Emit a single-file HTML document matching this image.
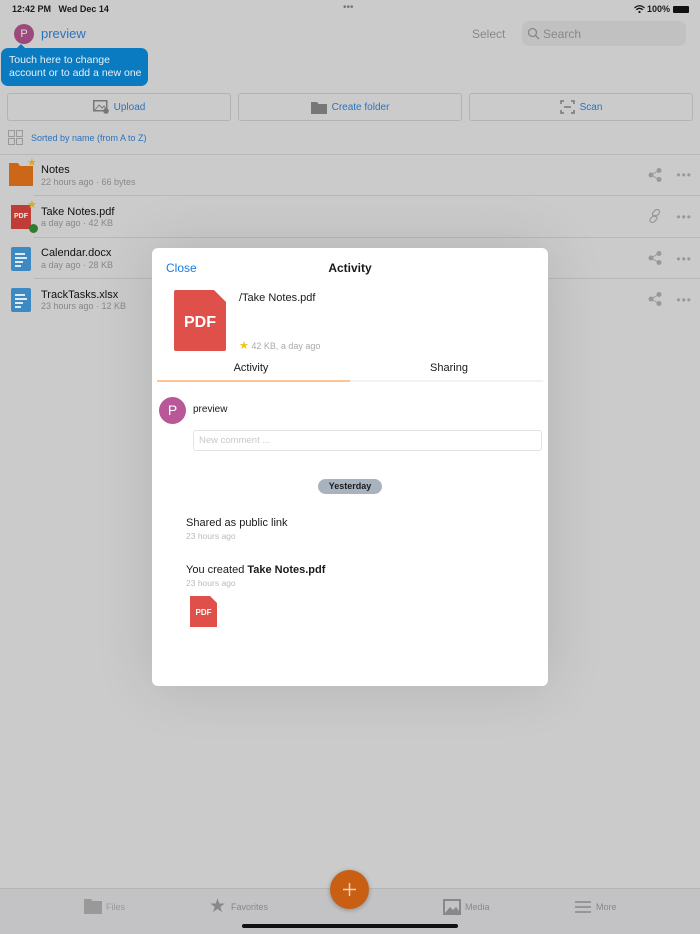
<!DOCTYPE html>
<html><head><meta charset="utf-8"><style>
*{box-sizing:border-box;margin:0;padding:0}
body{width:700px;height:934px;overflow:hidden;background:#cbcbcb;font-family:"Liberation Sans",sans-serif;position:relative;color:#1a1a1a}
.a{position:absolute}
.btn{position:absolute;top:93px;height:28px;border:1px solid #b3b3b3;border-radius:3px;font-size:10px;color:#2a73c0;display:flex;align-items:center;justify-content:center;gap:5px}
.row .n{font-size:11px;color:#111}
.row .m{font-size:9px;color:#888}
.sep{position:absolute;left:34px;right:0;height:1px;background:#b8b8b8}
.dots{position:absolute;right:8px;font-size:12px;color:#999;letter-spacing:1px}
.doc{position:absolute;left:11px;width:20px;height:24px;background:#3c89c4;border-radius:2px}
.doc i{position:absolute;left:4px;height:2px;background:#dfe9f2}
</style></head><body>
<div class="a" style="left:12px;top:4px;font-size:9px;font-weight:bold">12:42 PM&nbsp;&nbsp; Wed Dec 14</div>
<div class="a" style="left:343px;top:2px;font-size:10px;color:#777">•••</div>
<svg class="a" style="left:634px;top:5px" width="11" height="8"><path d="M0.5 3Q5.5 -1.5 10.5 3M2.2 4.8Q5.5 1.8 8.8 4.8" fill="none" stroke="#111" stroke-width="1.3"/><circle cx="5.5" cy="7" r="1.1" fill="#111"/></svg>
<div class="a" style="left:647px;top:4px;font-size:9px;font-weight:bold">100% <span style="display:inline-block;width:16px;height:7px;background:#111;border-radius:1px;vertical-align:middle"></span></div>
<div class="a" style="left:14px;top:24px;width:20px;height:20px;border-radius:50%;background:#9c4a7c;color:#ddd;font-size:11px;text-align:center;line-height:20px">P</div>
<div class="a" style="left:41px;top:26px;font-size:13px;color:#2a73c0">preview</div>
<div class="a" style="left:1px;top:48px;width:147px;height:38px;border-radius:7px;background:#0b7bc1;color:#e6f0f8;font-size:10.5px;padding:6px 0 0 8px;line-height:13px">Touch here to change<br>account or to add a new one</div>
<div class="a" style="left:16px;top:44px;border:5px solid transparent;border-bottom-color:#0b7bc1;border-top:0"></div>
<div class="a" style="left:472px;top:27px;font-size:12px;color:#888">Select</div>
<div class="a" style="left:522px;top:21px;width:164px;height:25px;border-radius:7px;background:#c1c1c1;color:#888;font-size:12px;padding:6px 0 0 21px">Search</div>
<svg class="a" style="left:527px;top:27px" width="13" height="13"><circle cx="5.5" cy="5.5" r="4" fill="none" stroke="#888" stroke-width="1.3"/><path d="M8.5 8.5 12 12" stroke="#888" stroke-width="1.4"/></svg>
<div class="btn" style="left:7px;width:224px"><svg width="16" height="14"><rect x=".75" y=".75" width="13" height="10" fill="none" stroke="#777" stroke-width="1.5"/><path d="M2 10 6 5 9 8 11 6 13 9" fill="none" stroke="#777"/><circle cx="13" cy="11" r="2.8" fill="#777"/></svg>Upload</div>
<div class="btn" style="left:238px;width:224px"><svg width="16" height="13"><path d="M0 1H6L7.5 3H16V13H0Z" fill="#777"/></svg>Create folder</div>
<div class="btn" style="left:469px;width:224px"><svg width="15" height="14"><path d="M1 4V1H4M11 1H14V4M14 10V13H11M4 13H1V10M4 7H11" fill="none" stroke="#777" stroke-width="1.5"/></svg>Scan</div>
<svg class="a" style="left:8px;top:130px" width="15" height="15"><g fill="none" stroke="#999"><rect x=".5" y=".5" width="6" height="6"/><rect x="8.5" y=".5" width="6" height="6"/><rect x=".5" y="8.5" width="6" height="6"/><rect x="8.5" y="8.5" width="6" height="6"/></g></svg>
<div class="a" style="left:31px;top:133px;font-size:9px;color:#2a73c0">Sorted by name (from A to Z)</div>
<div class="a" style="left:0;right:0;top:154px;height:1px;background:#b8b8b8"></div>
<div class="row">
<svg class="a" style="left:9px;top:163px" width="24" height="23"><path d="M0 0H9L11 3H24V23H0Z" fill="#cc6618"/></svg><div class="a" style="left:27px;top:156px;color:#d8a928;font-size:11px">★</div>
<div class="a n" style="left:41px;top:164px">Notes</div><div class="a m" style="left:41px;top:177px">22 hours ago · 66 bytes</div>
<div class="sep" style="top:195px"></div>
<div class="a" style="left:11px;top:205px;width:20px;height:24px;background:#c03c36;color:#eee;font-size:7px;font-weight:bold;text-align:center;line-height:24px">PDF</div><div class="a" style="left:27px;top:198px;color:#d8a928;font-size:11px">★</div><div class="a" style="left:29px;top:224px;width:9px;height:9px;border-radius:50%;background:#2d7d2d"></div>
<div class="a n" style="left:41px;top:206px">Take Notes.pdf</div><div class="a m" style="left:41px;top:218px">a day ago · 42 KB</div>
<div class="sep" style="top:237px"></div>
<div class="doc" style="top:247px"><i style="top:6px;width:10px"></i><i style="top:10px;width:12px"></i><i style="top:14px;width:8px"></i><i style="top:18px;width:6px"></i></div>
<div class="a n" style="left:41px;top:247px">Calendar.docx</div><div class="a m" style="left:41px;top:260px">a day ago · 28 KB</div>
<div class="sep" style="top:278px"></div>
<div class="doc" style="top:288px"><i style="top:6px;width:10px"></i><i style="top:10px;width:12px"></i><i style="top:14px;width:8px"></i><i style="top:18px;width:6px"></i></div>
<div class="a n" style="left:41px;top:289px">TrackTasks.xlsx</div><div class="a m" style="left:41px;top:301px">23 hours ago · 12 KB</div>
</div>
<div class="dots" style="top:168px">•••</div><div class="dots" style="top:210px">•••</div><div class="dots" style="top:252px">•••</div><div class="dots" style="top:293px">•••</div>
<svg class="a" style="left:648px;top:168px" width="14" height="14"><g fill="#999" stroke="#999"><circle cx="11" cy="2.5" r="2"/><circle cx="3" cy="7" r="2"/><circle cx="11" cy="11.5" r="2"/><path d="M11 2.5 3 7 11 11.5" fill="none"/></g></svg>
<svg class="a" style="left:648px;top:251px" width="14" height="14"><g fill="#999" stroke="#999"><circle cx="11" cy="2.5" r="2"/><circle cx="3" cy="7" r="2"/><circle cx="11" cy="11.5" r="2"/><path d="M11 2.5 3 7 11 11.5" fill="none"/></g></svg>
<svg class="a" style="left:648px;top:292px" width="14" height="14"><g fill="#999" stroke="#999"><circle cx="11" cy="2.5" r="2"/><circle cx="3" cy="7" r="2"/><circle cx="11" cy="11.5" r="2"/><path d="M11 2.5 3 7 11 11.5" fill="none"/></g></svg>
<svg class="a" style="left:648px;top:209px" width="14" height="14"><g fill="none" stroke="#999" stroke-width="1.3"><rect x="5.5" y="0" width="5" height="8" rx="2.5" transform="rotate(45 8 4)"/><rect x="3" y="6" width="5" height="8" rx="2.5" transform="rotate(45 5.5 10)"/></g></svg>

<div class="a" style="left:152px;top:248px;width:396px;height:438px;background:#fff;border-radius:6px;box-shadow:0 0 60px rgba(0,0,0,.12)">
<div class="a" style="left:14px;top:13px;font-size:12px;color:#1a7be0">Close</div>
<div class="a" style="left:0;right:0;top:13px;text-align:center;font-size:12px;font-weight:bold">Activity</div>
<svg class="a" style="left:22px;top:42px" width="52" height="61"><path d="M2 0H40L52 12V59Q52 61 50 61H2Q0 61 0 59V2Q0 0 2 0Z" fill="#e0504a"/><text x="26" y="37" text-anchor="middle" font-family="Liberation Sans" font-weight="bold" font-size="16" fill="#fff">PDF</text></svg>
<div class="a" style="left:87px;top:44px;font-size:11px">/Take Notes.pdf</div>
<div class="a" style="left:87px;top:91px;font-size:9px;color:#aaa"><span style="color:#f2c21b;font-size:11px">★</span> 42 KB, a day ago</div>
<div class="a" style="left:0;width:198px;top:114px;text-align:center;font-size:11px">Activity</div>
<div class="a" style="left:198px;width:198px;top:114px;text-align:center;font-size:11px">Sharing</div>
<div class="a" style="left:5px;width:193px;top:132px;height:2px;background:#fbc596"></div>
<div class="a" style="left:198px;width:193px;top:132px;height:2px;background:#f2f2f2"></div>
<div class="a" style="left:7px;top:149px;width:27px;height:27px;border-radius:50%;background:#b85898;color:#fff;font-size:14px;text-align:center;line-height:27px">P</div>
<div class="a" style="left:41px;top:156px;font-size:10px">preview</div>
<div class="a" style="left:41px;top:182px;width:349px;height:21px;border:1px solid #e2e2e2;border-radius:3px;font-size:9.5px;color:#c8c8c8;padding:4px 5px">New comment ...</div>
<div class="a" style="left:166px;top:231px;width:64px;height:15px;border-radius:8px;background:#a9b3c0;font-size:9px;font-weight:bold;text-align:center;line-height:15px">Yesterday</div>
<div class="a" style="left:34px;top:269px;font-size:11px">Shared as public link</div>
<div class="a" style="left:34px;top:283px;font-size:8.5px;color:#bbb">23 hours ago</div>
<div class="a" style="left:34px;top:316px;font-size:11px">You created <b>Take Notes.pdf</b></div>
<div class="a" style="left:34px;top:330px;font-size:8.5px;color:#bbb">23 hours ago</div>
<svg class="a" style="left:38px;top:348px" width="27" height="31"><path d="M0 0H20L27 7V31H0Z" fill="#e0504a"/><text x="13.5" y="19" text-anchor="middle" font-family="Liberation Sans" font-weight="bold" font-size="8" fill="#fff">PDF</text></svg>
</div>

<div class="a" style="left:0;right:0;top:888px;height:46px;background:#c3c3c6;border-top:1px solid #b5b5b5"></div>
<svg class="a" style="left:84px;top:899px" width="18" height="15"><path d="M0 0H7L8.5 2H18V15H0Z" fill="#999"/></svg><div class="a" style="left:106px;top:902px;font-size:9px;color:#999">Files</div>
<div class="a" style="left:209px;top:895px;font-size:19px;color:#888">★</div><div class="a" style="left:231px;top:902px;font-size:9px;color:#888">Favorites</div>
<svg class="a" style="left:443px;top:899px" width="18" height="16"><rect x="1" y="1" width="16" height="14" fill="none" stroke="#888" stroke-width="2"/><path d="M2 14 7 8 10 11 13 8 16 12V14Z" fill="#888"/></svg><div class="a" style="left:465px;top:902px;font-size:9px;color:#888">Media</div>
<svg class="a" style="left:575px;top:901px" width="16" height="12"><path d="M0 1H16M0 6H16M0 11H16" stroke="#888" stroke-width="1.5"/></svg><div class="a" style="left:596px;top:902px;font-size:9px;color:#888">More</div>
<div class="a" style="left:330px;top:870px;width:39px;height:39px;border-radius:50%;background:#c95f12;box-shadow:0 1px 5px rgba(0,0,0,.3)"></div>
<svg class="a" style="left:342px;top:882px" width="15" height="15"><path d="M7.5 1V14M1 7.5H14" stroke="#f0cfb2" stroke-width="1.5"/></svg>
<div class="a" style="left:242px;top:924px;width:216px;height:4px;border-radius:2px;background:#111"></div>
</body></html>
